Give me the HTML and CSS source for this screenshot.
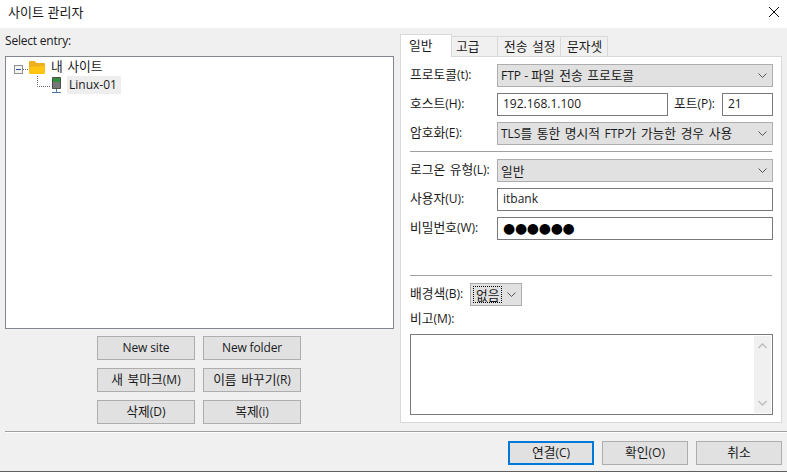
FILE: index.html
```html
<!DOCTYPE html>
<html lang="ko">
<head>
<meta charset="utf-8">
<title>사이트 관리자</title>
<link rel="stylesheet" href="styles.css">
</head>
<body>
<div class="app">
  <header class="titlebar">
    <span class="title-text">사이트 관리자</span>
    <svg class="close" width="12" height="12" viewBox="0 0 12 12"><path d="M1 1L11 11M11 1L1 11" stroke="#111" stroke-width="1" fill="none"/></svg>
  </header>
  <main class="main">
    <section class="left">
      <div class="select-label">Select entry:</div>
      <div class="tree">
        <div class="tree-row">
          <svg class="expander" width="15" height="9" viewBox="0 0 15 9"><rect x=".5" y=".5" width="8" height="8" fill="#f4f4f4" stroke="#8e8f8f"/><path d="M2 4.500H7" stroke="#33569c"/><path d="M9 4.500H15" stroke="#666" stroke-dasharray="1 1"/></svg>
          <svg class="folder" width="16" height="13" viewBox="0 0 16 13"><path d="M0 1Q0 0 1 0H5.500L7.500 2H15Q16 2 16 3V6H0Z" fill="#eeb01c"/><path d="M0 6L16 5V12Q16 13 15 13H1Q0 13 0 12Z" fill="#fdc512"/></svg>
          <span class="node-text ko">내 사이트</span>
        </div>
        <div class="tree-row child">
          <svg class="connector" width="14" height="11" viewBox="0 0 14 11"><path d="M.5 0V10.500H14" stroke="#666" stroke-dasharray="1 1" fill="none"/></svg>
          <svg class="server" width="9" height="16" viewBox="0 0 9 16"><rect x="0" y="0" width="9" height="12" rx="1" fill="#4d4d4d"/><rect x="1" y="1" width="7" height="4" fill="#2f8f3f"/><rect x="1" y="5" width="7" height="6" fill="#777"/><path d="M4.500 12V15M0 15.500H9" stroke="#4a7ab0"/></svg>
          <span class="node-text selected">Linux-01</span>
        </div>
      </div>
      <div class="site-buttons">
        <button class="btn site-btn tight">New site</button>
        <button class="btn site-btn tight">New folder</button>
        <button class="btn site-btn lift"><span class="ko">새 북마크</span>(M)</button>
        <button class="btn site-btn lift"><span class="ko">이름 바꾸기</span>(R)</button>
        <button class="btn site-btn lift"><span class="ko">삭제</span>(D)</button>
        <button class="btn site-btn lift"><span class="ko">복제</span>(i)</button>
      </div>
    </section>
    <section class="right">
      <div class="tabs">
        <div class="tab active tab-1 ko">일반</div>
        <div class="tab tab-2 ko">고급</div>
        <div class="tab tab-3 ko">전송 설정</div>
        <div class="tab tab-4 ko">문자셋</div>
      </div>
      <div class="panel">
        <div class="row">
          <label class="lbl"><span class="ko">프로토콜</span>(t):</label>
          <div class="combo grow"><span>FTP - <span class="ko">파일 전송 프로토콜</span></span><svg class="chev" width="9" height="5" viewBox="0 0 9 5"><path d="M.5.5L4.500 4.500L8.500.5" stroke="#555" fill="none"/></svg></div>
        </div>
        <div class="row">
          <label class="lbl"><span class="ko">호스트</span>(H):</label>
          <div class="input host">192.168.1.100</div>
          <label class="port-lbl"><span class="ko">포트</span>(P):</label>
          <div class="input port">21</div>
        </div>
        <div class="row">
          <label class="lbl"><span class="ko">암호화</span>(E):</label>
          <div class="combo grow"><span>TLS<span class="ko">를 통한 명시적 </span>FTP<span class="ko">가 가능한 경우 사용</span></span><svg class="chev" width="9" height="5" viewBox="0 0 9 5"><path d="M.5.5L4.500 4.500L8.500.5" stroke="#555" fill="none"/></svg></div>
        </div>
        <hr class="sep sep-a">
        <div class="row">
          <label class="lbl"><span class="ko">로그온 유형</span>(L):</label>
          <div class="combo grow"><span class="ko">일반</span><svg class="chev" width="9" height="5" viewBox="0 0 9 5"><path d="M.5.5L4.500 4.500L8.500.5" stroke="#555" fill="none"/></svg></div>
        </div>
        <div class="row">
          <label class="lbl"><span class="ko">사용자</span>(U):</label>
          <div class="input grow">itbank</div>
        </div>
        <div class="row">
          <label class="lbl"><span class="ko">비밀번호</span>(W):</label>
          <div class="input grow dots">●●●●●●</div>
        </div>
        <hr class="sep sep-b">
        <div class="color-row">
          <label class="lbl-auto"><span class="ko">배경색</span>(B):</label>
          <div class="combo mini"><span class="focus ko">없음</span><svg class="chev" width="9" height="5" viewBox="0 0 9 5"><path d="M.5.5L4.500 4.500L8.500.5" stroke="#555" fill="none"/></svg></div>
        </div>
        <div class="memo-label"><span class="ko">비고</span>(M):</div>
        <div class="memo">
          <div class="scrollbar">
            <svg width="9" height="6" viewBox="0 0 9 6"><path d="M.5 5L4.500 1L8.500 5" stroke="#bdbdbd" stroke-width="1.500" fill="none"/></svg>
            <svg width="9" height="6" viewBox="0 0 9 6"><path d="M.5 1L4.500 5L8.500 1" stroke="#bdbdbd" stroke-width="1.500" fill="none"/></svg>
          </div>
        </div>
      </div>
    </section>
  </main>
  <div class="footer-rule"></div>
  <footer class="footer">
    <button class="btn foot-btn primary lift"><span class="ko">연결</span>(C)</button>
    <button class="btn foot-btn lift"><span class="ko">확인</span>(O)</button>
    <button class="btn foot-btn lift"><span class="ko">취소</span></button>
  </footer>
</div>
</body>
</html>
```

FILE: styles.css
```css
* { box-sizing: border-box; }
html, body { margin: 0; padding: 0; }
body {
  width: 787px;
  height: 472px;
  overflow: hidden;
  background: #f0f0f0;
  color: #1a1a1a;
  font-family: "Open Sans", "Noto Sans CJK KR", sans-serif;
  font-size: 12px;
  line-height: 16px;
}
.ko { font-family: "Noto Sans CJK KR", sans-serif; font-size: 12.75px; word-spacing: 1px; }
.app {
  display: flex;
  flex-direction: column;
  height: 472px;
  border-bottom: 1px solid #5f5f5f;
}
.titlebar {
  flex: none;
  height: 28px;
  background: #fff;
  display: flex;
  align-items: center;
  justify-content: space-between;
  padding: 0 7px 4px 8px;
}
.title-text { font-family: "Noto Sans CJK KR", sans-serif; font-size: 13px; }
.close { flex: none; }
.main { flex: none; display: flex; height: 403px; }
.left { flex: none; width: 400px; padding-left: 5px; }
.select-label { height: 28px; padding-top: 5px; letter-spacing: -.2px; }
.tree {
  width: 389px;
  height: 273px;
  background: #fff;
  border: 1px solid #828790;
  padding: 0 0 0 8px;
}
.tree-row { display: flex; align-items: center; height: 18px; }
.tree-row.child { padding-left: 23px; height: 20px; }
.expander { flex: none; margin-top: 7px; }
.folder { flex: none; margin: 2px 6px 0 0; }
.connector { flex: none; align-self: flex-start; margin: 1px 1px 0 0; }
.server { flex: none; margin-right: 6px; }
.selected { background: #eeeeee; padding: 1px 4px 1px 2px; }
.site-buttons {
  display: grid;
  grid-template-columns: 98px 98px;
  grid-auto-rows: 24px;
  gap: 8px;
  margin: 7px 0 0 92px;
}
.btn {
  font: inherit;
  color: inherit;
  background: #e1e1e1;
  border: 1px solid #adadad;
  padding: 0;
  margin: 0;
  height: 24px;
}
.lift { padding-bottom: 2px; }
.tight { letter-spacing: -.15px; }
.right { flex: none; width: 387px; padding-top: 6px; }
.tabs { display: flex; height: 23px; align-items: flex-end; position: relative; z-index: 1; }
.tab {
  height: 21px;
  background: #f0f0f0;
  border: 1px solid #d9d9d9;
  border-left: 0;
  padding-top: 1px;
}
.tab.active { height: 23px; background: #fff; border-left: 1px solid #d9d9d9; border-bottom: 0; padding-top: 2px; }
.tab-1 { width: 52px; padding-left: 8px; }
.tab-2 { width: 46px; padding-left: 4px; }
.tab-3 { width: 63px; padding-left: 6px; }
.tab-4 { width: 47px; padding-left: 6px; }
.panel {
  width: 382px;
  height: 367px;
  margin-top: -1px;
  background: #fff;
  border: 1px solid #d9d9d9;
  padding: 7px 8px 0 9px;
}
.row { display: flex; align-items: center; height: 23px; margin-bottom: 6px; }
.lbl { flex: none; width: 87px; padding-bottom: 2px; }
.grow { flex: 1; }
.combo {
  display: flex;
  align-items: center;
  justify-content: space-between;
  height: 23px;
  background: #e1e1e1;
  border: 1px solid #adadad;
  padding: 0 5px 0 3px;
}
.input {
  height: 23px;
  background: #fff;
  border: 1px solid #7a7a7a;
  padding: 2px 5px;
}
.host { width: 171px; }
.port-lbl { flex: none; width: 54px; padding: 0 0 2px 6px; }
.port { width: 51px; }
.dots { font-family: "DejaVu Sans", sans-serif; color: #000; font-size: 14px; letter-spacing: -.3px; }
.chev { flex: none; }
.sep { border: 0; height: 1px; margin: 0 1px 0 0; background: #a0a0a0; }
.sep-a { margin-bottom: 7px; }
.sep-b { margin-top: 35px; margin-bottom: 7px; }
.color-row { display: flex; align-items: center; height: 23px; }
.lbl-auto { flex: none; width: 60px; padding-bottom: 2px; }
.mini { width: 52px; padding: 0 5px 0 2px; }
.focus { border: 1px dotted #000; padding: 0 2px; line-height: 15px; }
.memo-label { height: 28px; padding-top: 4px; }
.memo {
  height: 81px;
  background: #fff;
  border: 1px solid #7a7a7a;
  display: flex;
  justify-content: flex-end;
  padding: 1px;
}
.scrollbar {
  width: 17px;
  background: #f0f0f0;
  display: flex;
  flex-direction: column;
  justify-content: space-between;
  align-items: center;
  padding: 7px 0;
}
.footer-rule { flex: none; height: 2px; margin-left: 5px; background: #a0a0a0; border-bottom: 1px solid #fff; }
.footer {
  flex: 1;
  display: flex;
  justify-content: flex-end;
  gap: 8px;
  padding: 8px 5px 0 0;
}
.foot-btn { width: 86px; }
.primary { border: 2px solid #0078d7; }
```
